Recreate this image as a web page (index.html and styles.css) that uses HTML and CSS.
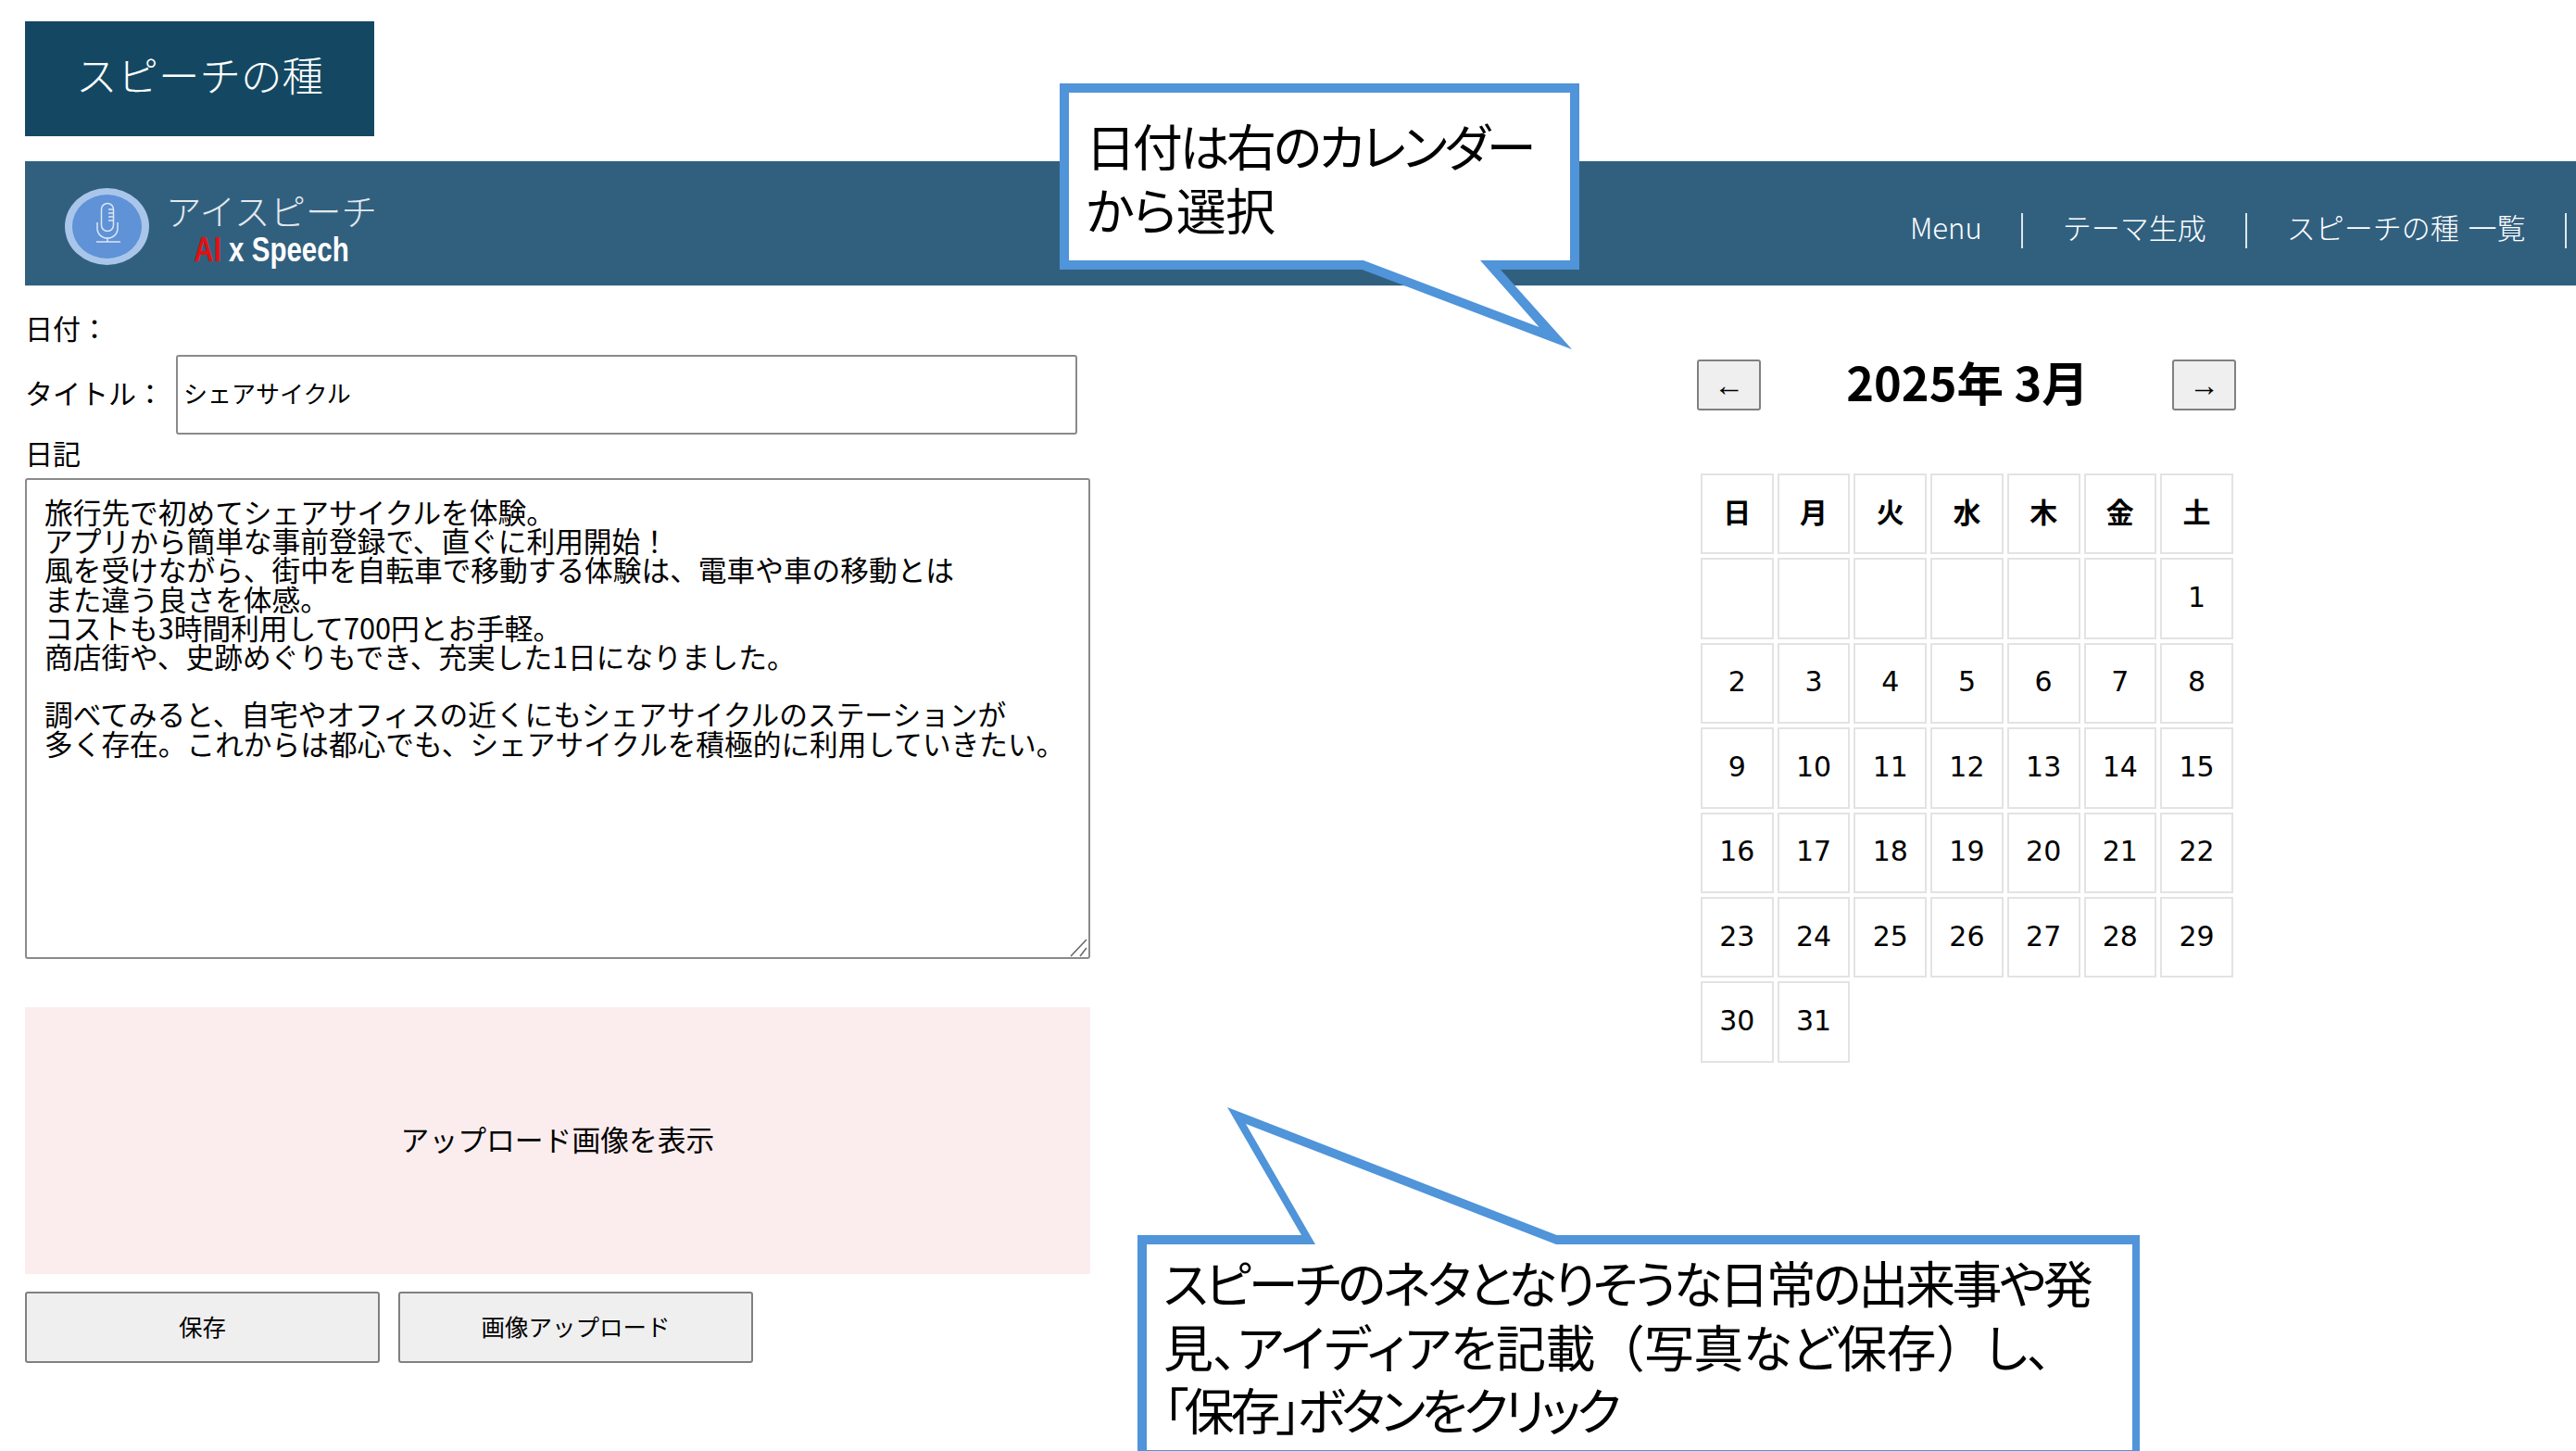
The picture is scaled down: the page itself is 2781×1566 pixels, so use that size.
FILE: index.html
```html
<!DOCTYPE html>
<html lang="ja">
<head>
<meta charset="utf-8">
<title>スピーチの種</title>
<link rel="stylesheet" href="styles.css">
</head>
<body>
<h1 class="page-title">スピーチの種</h1>
<header class="site-header">
  <div class="brand">
    <svg class="brand-logo" viewBox="0 0 91 83" aria-hidden="true">
      <ellipse cx="45.5" cy="41.5" rx="45.5" ry="41.5" fill="#a9c6ea"/>
      <ellipse cx="45.5" cy="41.5" rx="37.5" ry="34.5" fill="#5f92d7"/>
      <g fill="none" stroke="#dbe6f4" stroke-width="1.5">
        <rect x="39.5" y="16.5" width="13" height="30" rx="6.5"/>
        <path d="M35 37v6c0 7 5 11 11 11s11-4 11-11v-6"/>
        <path d="M46 54v4M34 58h26"/>
        <path d="M47 23h5M47 27h5M47 31h5M47 35h5"/>
      </g>
    </svg>
    <div class="brand-text">
      <span class="brand-name">アイスピーチ</span>
      <span class="brand-tag"><span class="brand-ai">AI</span> x Speech</span>
    </div>
  </div>
  <nav class="nav">
    <a class="nav-item">Menu</a>
    <a class="nav-item">テーマ生成</a>
    <a class="nav-item">スピーチの種 一覧</a>
  </nav>
</header>
<main class="content">
  <form class="diary">
    <div class="label date-label">日付：</div>
    <div class="title-row">
      <label class="label title-label">タイトル：</label>
      <input class="title-input" type="text" value="シェアサイクル">
    </div>
    <div class="label diary-label">日記</div>
    <div class="text-wrap">
      <textarea class="diary-text">旅行先で初めてシェアサイクルを体験。
アプリから簡単な事前登録で、直ぐに利用開始！
風を受けながら、街中を自転車で移動する体験は、電車や車の移動とは
また違う良さを体感。
コストも3時間利用して700円とお手軽。
商店街や、史跡めぐりもでき、充実した1日になりました。

調べてみると、自宅やオフィスの近くにもシェアサイクルのステーションが
多く存在。これからは都心でも、シェアサイクルを積極的に利用していきたい。</textarea>
      <svg class="grip" viewBox="0 0 20 20" aria-hidden="true">
        <path d="M1 19 18 1M11 19l7-9" fill="none" stroke="#6a6a6a" stroke-width="1.6"/>
      </svg>
    </div>
    <div class="image-box">アップロード画像を表示</div>
    <div class="actions">
      <button class="btn" type="button">保存</button>
      <button class="btn" type="button">画像アップロード</button>
    </div>
  </form>
  <section class="calendar">
    <div class="cal-head">
      <button class="cal-nav" type="button">←</button>
      <div class="cal-title">2025年 3月</div>
      <button class="cal-nav" type="button">→</button>
    </div>
    <table class="cal-table">
      <thead><tr><th>日</th><th>月</th><th>火</th><th>水</th><th>木</th><th>金</th><th>土</th></tr></thead>
      <tbody>
        <tr><td></td><td></td><td></td><td></td><td></td><td></td><td>1</td></tr>
        <tr><td>2</td><td>3</td><td>4</td><td>5</td><td>6</td><td>7</td><td>8</td></tr>
        <tr><td>9</td><td>10</td><td>11</td><td>12</td><td>13</td><td>14</td><td>15</td></tr>
        <tr><td>16</td><td>17</td><td>18</td><td>19</td><td>20</td><td>21</td><td>22</td></tr>
        <tr><td>23</td><td>24</td><td>25</td><td>26</td><td>27</td><td>28</td><td>29</td></tr>
        <tr><td>30</td><td>31</td></tr>
      </tbody>
    </table>
  </section>
</main>

<aside class="callout callout-date">
  <svg class="callout-shape" viewBox="0 0 561 287" aria-hidden="true">
    <polygon points="0,0 561,0 561,201 476,201 553,287 326.5,201 0,201" fill="#5094d9"/>
    <polygon points="10,10 551,10 551,191 454,191 517.6,263 328,191 10,191" fill="#fff"/>
  </svg>
  <p class="callout-text"><span class="tight">日付は右のカレンダー</span><br><span class="slight">から選択</span></p>
</aside>
<aside class="callout callout-save">
  <svg class="callout-shape" viewBox="0 0 1082 371" aria-hidden="true">
    <polygon points="0,138 177,138 97,0 452.6,138 1082,138 1082,380 0,380" fill="#5094d9"/>
    <polygon points="10,148 192,148 117,18 452,148 1074,148 1074,370 10,370" fill="#fff"/>
  </svg>
  <p class="callout-text"><span class="tight">スピーチのネタとなりそうな日常の出来事や発</span><br><span class="slight">見、アイディアを記載<span class="full">（</span>写真など保存<span class="full">）</span>し、</span><br><span class="tighter">「保存」ボタンをクリック</span></p>
</aside>
</body>
</html>
```

FILE: styles.css
```css
* { box-sizing: border-box; }
html, body { margin: 0; height: 100%; }
body {
  position: relative;
  width: 2781px;
  height: 1566px;
  overflow: hidden;
  padding-top: 23px;
  background: #fff;
  color: #000;
  font-family: "Noto Sans CJK JP", "Noto Sans", sans-serif;
  font-weight: 400;
}
.page-title {
  display: flex;
  align-items: center;
  justify-content: center;
  width: 377px;
  height: 124px;
  margin: 0 0 27px 27px;
  padding-bottom: 9px;
  background: #144862;
  color: #fff;
  font-size: 44.5px;
  font-weight: 300;
  line-height: 1;
}
.site-header {
  display: flex;
  justify-content: space-between;
  height: 135px;
  margin-left: 27px;
  padding-left: 43px;
  background: #31607f;
  border-bottom: 1px solid #d5e2ec;
  color: #fff;
}
.brand { display: flex; align-items: center; gap: 18px; padding-top: 7px; }
.brand-logo { width: 91px; height: 83px; }
.brand-text { display: flex; flex-direction: column; align-items: center; }
.brand-name { color: #e3e9ee; font-size: 38.5px; font-weight: 300; line-height: 50px; }
.brand-tag {
  display: inline-block;
  font-family: "Liberation Sans", sans-serif;
  font-size: 36px;
  font-weight: 700;
  line-height: 38px;
  transform: scaleX(.82);
  white-space: nowrap;
}
.brand-ai { color: #e31010; }
.nav { display: flex; align-items: flex-start; padding: 56px 10px 0 0; }
.nav-item {
  height: 38px;
  padding: 0 42.5px;
  border-right: 2px solid #dfe7ec;
  font-size: 31px;
  line-height: 30px;
  font-weight: 300;
  word-spacing: 3px;
  white-space: nowrap;
}
.content {
  display: grid;
  grid-template-columns: 1150px 590px;
  column-gap: 655px;
  padding-left: 27px;
}
.label { font-size: 30px; line-height: 40px; white-space: nowrap; }
.date-label { margin-top: 24px; }
.title-row { display: flex; align-items: center; gap: 13px; margin-top: 10px; }
.title-label { padding-bottom: 6px; }
.title-input {
  width: 973px;
  height: 86px;
  padding: 0 6px 6px;
  border: 2px solid #8a8a8a;
  border-radius: 3px;
  font: 26px "Noto Sans CJK JP", sans-serif;
  color: #000;
}
.diary-label { margin-top: 1px; height: 26px; line-height: 36px; }
.text-wrap { position: relative; margin-top: 20px; }
.diary-text {
  display: block;
  width: 1150px;
  height: 519px;
  padding: 18px 19px;
  border: 2px solid #8a8a8a;
  border-radius: 3px;
  font: 30.7px/31.2px "Noto Sans CJK JP", sans-serif;
  color: #000;
  overflow: hidden;
  resize: none;
}
.grip { position: absolute; right: 2px; bottom: 2px; width: 20px; height: 20px; }
.image-box {
  display: flex;
  align-items: center;
  justify-content: center;
  height: 288px;
  margin-top: 52px;
  padding-bottom: 6px;
  background: #fbedee;
  font-size: 30.8px;
}
.actions { display: flex; gap: 20px; margin-top: 19px; }
.btn {
  width: 383px;
  height: 77px;
  padding: 0 0 5px;
  background: #efefef;
  border: 2px solid #808080;
  border-radius: 3px;
  font: 25.5px "Noto Sans CJK JP", sans-serif;
  color: #000;
}
.calendar { padding-top: 79px; }
.cal-head { display: flex; justify-content: space-between; align-items: center; width: 582px; }
.cal-nav {
  width: 69px;
  height: 55px;
  padding: 0;
  background: #efefef;
  border: 2px solid #808080;
  border-radius: 3px;
  font: 33px/1 "Liberation Sans", sans-serif;
  color: #000;
}
.cal-title { height: 55px; padding-left: 2px; font-size: 50.5px; line-height: 46px; font-weight: 700; }
.cal-table {
  margin: 64px 0 0;
  border-collapse: separate;
  border-spacing: 4px;
  table-layout: fixed;
  width: 583px;
}
.cal-table th, .cal-table td {
  height: 87.4px;
  padding: 0 0 3px;
  border: 2px solid #e3e3e3;
  text-align: center;
  font-size: 30px;
  font-family: "DejaVu Sans", "Noto Sans CJK JP", sans-serif;
}
.cal-table th { padding-bottom: 7px; font-family: "Noto Sans CJK JP", sans-serif; font-weight: 700; }

.callout { position: absolute; margin: 0; }
.callout-shape { position: absolute; inset: 0; width: 100%; height: 100%; overflow: visible; }
.callout-text {
  position: relative;
  margin: 0;
  font-size: 54px;
  font-feature-settings: "palt";
  white-space: nowrap;
}
.tight { letter-spacing: -3.3px; }
.slight { letter-spacing: -.7px; }
.tighter { letter-spacing: -4.4px; }
.full { font-feature-settings: normal; }
.callout-date { left: 1144px; top: 90px; width: 561px; height: 287px; }
.callout-date .callout-text { padding: 32px 0 0 28px; line-height: 69px; }
.callout-save { left: 1228px; top: 1195px; width: 1082px; height: 371px; }
.callout-save .callout-text { padding: 155px 0 0 28px; line-height: 68.5px; }
```
